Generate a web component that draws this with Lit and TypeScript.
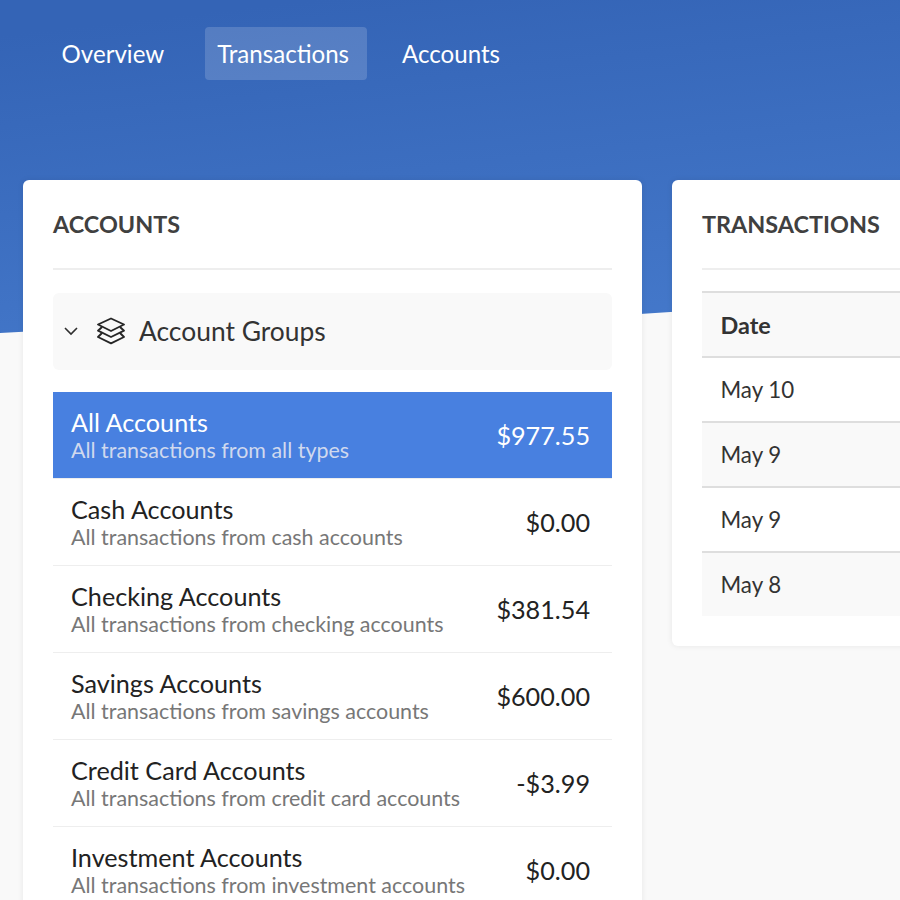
import { LitElement, html, css, svg } from "lit";
import { customElement } from "lit/decorators.js";

const accounts = [
  { name: "All Accounts", desc: "All transactions from all types", amount: "$977.55", active: true },
  { name: "Cash Accounts", desc: "All transactions from cash accounts", amount: "$0.00" },
  { name: "Checking Accounts", desc: "All transactions from checking accounts", amount: "$381.54" },
  { name: "Savings Accounts", desc: "All transactions from savings accounts", amount: "$600.00" },
  { name: "Credit Card Accounts", desc: "All transactions from credit card accounts", amount: "-$3.99" },
  { name: "Investment Accounts", desc: "All transactions from investment accounts", amount: "$0.00" },
];

const dates = ["May 10", "May 9", "May 9", "May 8"];

@customElement("app-root")
export class AppRoot extends LitElement {
  static styles = css`
    :host {
      display: block;
      position: relative;
      width: 900px;
      height: 900px;
      overflow: hidden;
      background: #f9f9f9;
      font-family: Lato, "Liberation Sans", sans-serif;
      color: #222;
    }
    .hero {
      position: absolute;
      top: 0;
      left: 0;
      width: 900px;
      height: 340px;
    }
    .content {
      position: relative;
    }
    nav {
      display: flex;
      gap: 23px;
      padding: 27px 0 0 49.6px;
      height: 180px;
      box-sizing: border-box;
      align-items: flex-start;
    }
    nav a {
      padding: 0 18px 0 12px;
      height: 53px;
      line-height: 54px;
      font-size: 24.1px;
      color: #fff;
      border-radius: 4px;
    }
    nav a.current {
      background: rgba(255, 255, 255, 0.16);
    }
    .cards {
      display: grid;
      grid-template-columns: 619px 619px;
      gap: 30px;
      padding-left: 23px;
      align-items: start;
    }
    .card {
      background: #fff;
      border-radius: 6px;
      padding: 0 30px 30px;
      box-shadow: 0 0 6px rgba(0, 0, 0, 0.08);
    }
    h2 {
      margin: 0;
      height: 90px;
      line-height: 89px;
      box-sizing: border-box;
      border-bottom: 2px solid #eeeeee;
      font-size: 23.4px;
      font-weight: 700;
      color: #404040;
      text-transform: uppercase;
    }
    .groups {
      margin-top: 23px;
      height: 77px;
      box-sizing: border-box;
      padding-bottom: 1px;
      display: flex;
      align-items: center;
      background: #f9f9f9;
      border-radius: 6px;
      font-size: 26.4px;
      color: #333;
    }
    .chevron {
      margin-left: 10px;
      width: 16px;
      height: 16px;
    }
    .stack {
      margin-left: 17px;
      margin-right: 13px;
      width: 30px;
      height: 30px;
    }
    .list {
      margin-top: 22px;
    }
    .row {
      display: flex;
      justify-content: space-between;
      align-items: center;
      height: 87px;
      box-sizing: border-box;
      padding: 0 22px 0 18px;
      border-bottom: 1px solid #eeeeee;
    }
    .row.active {
      background: #4880e0;
      color: #fff;
    }
    .text {
      padding-top: 2px;
    }
    .name {
      font-size: 25.2px;
      line-height: 27px;
    }
    .desc {
      margin-top: 1px;
      font-size: 21.45px;
      line-height: 27px;
      color: #777;
    }
    .active .desc {
      color: #d0d9ee;
    }
    .amount {
      font-size: 25.2px;
    }
    .table {
      margin-top: 21px;
    }
    .table div {
      height: 65px;
      box-sizing: border-box;
      padding-left: 18.5px;
      display: flex;
      align-items: center;
      font-size: 22.3px;
      color: #333;
      border-bottom: 2px solid #dedede;
    }
    .table div.alt {
      background: #f9f9f9;
    }
    .table div:last-child {
      border-bottom: none;
      height: 63px;
    }
    .table .head {
      height: 67px;
      border-top: 2px solid #dedede;
      font-size: 23.4px;
      font-weight: 700;
    }
  `;

  chevron() {
    return html`<svg class="chevron" viewBox="0 0 16 16" fill="none" stroke="#2f2f2f" stroke-width="1.6">
      ${svg`<path d="M2 5l6 6 6-6" />`}
    </svg>`;
  }

  stackIcon() {
    return html`<svg class="stack" viewBox="0 0 30 30" fill="none" stroke="#262626" stroke-width="1.9" stroke-linejoin="round">
      ${svg`<path d="M15 2.5L28 8.5 15 15 2 8.5z" />
      <path d="M6 11L2 14.7 15 21 28 14.7 24 11" />
      <path d="M6 17L2 21 15 27.3 28 21 24 17" />`}
    </svg>`;
  }

  render() {
    return html`
      <svg class="hero" viewBox="0 0 900 340" preserveAspectRatio="none">
        <defs>
          <linearGradient id="hero" x1="0.35" y1="0" x2="0.65" y2="1">
            <stop offset="0" stop-color="#3464b6" />
            <stop offset="1" stop-color="#4478ca" />
          </linearGradient>
        </defs>
        <path d="M0 0H900V312C800 308 720 308 640 314C500 324 250 320 0 333Z" fill="url(#hero)" />
      </svg>
      <div class="content">
        <nav>
          <a>Overview</a>
          <a class="current">Transactions</a>
          <a>Accounts</a>
        </nav>
        <div class="cards">
          <section class="card">
            <h2>Accounts</h2>
            <div class="groups">${this.chevron()}${this.stackIcon()}<span>Account Groups</span></div>
            <div class="list">
              ${accounts.map(
                (a) => html`<div class="row ${a.active ? "active" : ""}">
                  <div class="text">
                    <div class="name">${a.name}</div>
                    <div class="desc">${a.desc}</div>
                  </div>
                  <div class="amount">${a.amount}</div>
                </div>`
              )}
            </div>
          </section>
          <section class="card">
            <h2>Transactions</h2>
            <div class="table">
              <div class="head alt">Date</div>
              ${dates.map((d, i) => html`<div class="${i % 2 ? "alt" : ""}">${d}</div>`)}
            </div>
          </section>
        </div>
      </div>
    `;
  }
}
